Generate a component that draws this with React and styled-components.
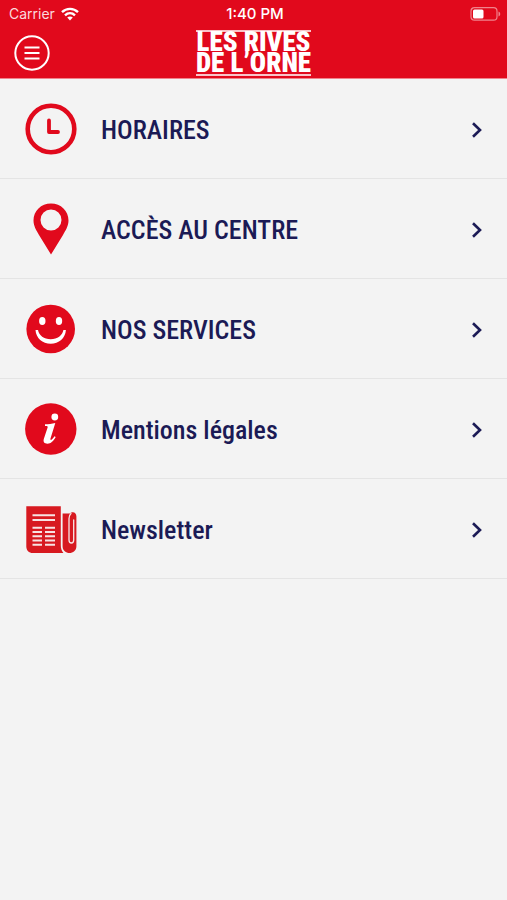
import React from "react";
import styled, { createGlobalStyle } from "styled-components";

const RED = "#e1091c";
const NAVY = "#1b1a55";

const GlobalStyle = createGlobalStyle`
  * { box-sizing: border-box; }
  body {
    margin: 0;
    background: #f3f3f3;
    font-family: "Roboto Condensed", "Liberation Sans", sans-serif;
  }
`;

const Header = styled.header`
  background: ${RED};
  color: #fff;
  border-bottom: 1px solid #f0838c;
`;

const StatusBar = styled.div`
  display: grid;
  grid-template-columns: 1fr auto 1fr;
  align-items: center;
  height: 28px;
  padding: 0 6px 0 9px;
  font: 14px/20px Inter, sans-serif;
`;

const Carrier = styled.div`
  display: flex;
  align-items: center;
  gap: 6px;
  color: #fbd9dc;
`;

const Time = styled.time`
  font-size: 15px;
  font-weight: 500;
`;

const Battery = styled.svg`
  justify-self: end;
`;

const NavBar = styled.div`
  display: grid;
  grid-template-columns: 1fr auto 1fr;
  align-items: center;
  height: 50px;
  padding: 0 14px;
`;

const MenuButton = styled.button`
  display: flex;
  width: 36px;
  height: 36px;
  padding: 0;
  border: 0;
  background: none;
  color: inherit;
  cursor: pointer;
`;

const Logo = styled.h1`
  margin: 0;
  border: solid #f9c4c9;
  border-width: 2px 0;
  font-size: 27px;
  line-height: 21px;
  font-weight: 900;
  text-align: center;
  white-space: nowrap;
`;

const List = styled.ul`
  margin: 0;
  padding: 0;
  list-style: none;
`;

const Item = styled.li`
  border-bottom: 1px solid #e4e4e4;
`;

const RowLink = styled.a`
  display: flex;
  align-items: center;
  gap: 23px;
  height: 99px;
  padding: 0 24px;
  color: ${NAVY};
  text-decoration: none;
`;

const Icon = styled.svg`
  flex: none;
  color: ${RED};
`;

const Label = styled.span`
  flex: 1;
  padding-top: 2px;
  font-size: 26px;
  line-height: 40px;
  font-weight: 500;
  white-space: nowrap;
`;

const Clock = () => (
  <Icon width="54" height="54" viewBox="0 0 54 54" fill="none" stroke="currentColor" aria-hidden="true">
    <circle cx="27" cy="27" r="23.3" strokeWidth="4.6" />
    <path d="M25 18.500V30h9" strokeWidth="3.8" strokeLinecap="round" strokeLinejoin="round" />
  </Icon>
);

const Pin = () => (
  <Icon width="54" height="54" viewBox="0 0 54 54" fill="currentColor" aria-hidden="true">
    <path fillRule="evenodd" d="M27 1.500C17 1.500 9.500 9 9.500 18.500c0 5.500 3 10 5.500 14.500L27 52.500 39 33c2.500-4.500 5.500-9 5.500-14.500C44.500 9 37 1.500 27 1.500zM27 7.500a10.500 10.500 0 1 1 0 21 10.500 10.500 0 0 1 0-21z" />
  </Icon>
);

const Smile = () => (
  <Icon width="54" height="54" viewBox="0 0 54 54" aria-hidden="true">
    <circle cx="26.700" cy="27" r="24.300" fill="currentColor" />
    <ellipse cx="18.300" cy="19" rx="3.200" ry="4" fill="#fff" />
    <ellipse cx="35" cy="19" rx="3.200" ry="4" fill="#fff" />
    <path d="M11.500 28c.5 8 7 13.800 15.200 13.800S41.400 36 41.900 28h-2.500c-1 5.500-6 9.300-12.700 9.300S15 33.500 14 28z" fill="#fff" />
  </Icon>
);

const Info = () => (
  <Icon width="54" height="54" viewBox="0 0 54 54" aria-hidden="true">
    <circle cx="26.800" cy="27" r="25.700" fill="currentColor" />
    <circle cx="30.800" cy="15" r="3.400" fill="#fff" />
    <path d="M21 22.300c3.600 0 6.800-.5 10.300-1.400l-4.800 15.600c-.4 1.500.4 1.700 1.300 1 1-.8 1.900-2 2.700-3.200l1.200.8c-2.200 4-4.900 6.700-8.200 6.700-3.200 0-4.500-1.800-3.700-4.700l3.800-11.600c.3-1.100-.2-1.600-1.200-1.600H21z" fill="#fff" />
  </Icon>
);

const News = () => (
  <Icon width="54" height="54" viewBox="0 0 54 54" fill="#d71920" aria-hidden="true">
    <path d="M2.300 4.300h34.500v39c0 3.500.8 5.500 2.600 7.700H9c-4.200 0-6.700-2.700-6.700-6.500z" />
    <path d="M38.600 11.500h7.200c1-.9 2-1.200 3-1.200 2.200 0 3.600 1.700 3.600 4.200v29.800c0 9-13.800 9-13.800 0z" />
    <path d="M47 11.500c-1.500 1.300-2 2.800-2 5V38c0 4 4.700 4 4.700 0V18" fill="none" stroke="#f7e6e6" strokeWidth="1.300" strokeLinecap="round" />
    <path d="M8.500 13.300h22.500M8.500 18h22.500M8.500 25.800h9.500M21 25.800h10M8.500 30h9.500M21 30h10M8.500 34.300h9.500M21 34.300h10M8.500 38.500h9.500M21 38.500h10M8.500 42.700h9.500M21 42.700h10" fill="none" stroke="#f7e3e3" strokeWidth="2" />
  </Icon>
);

const Chevron = () => (
  <svg width="14" height="20" viewBox="0 0 14 20" fill="none" stroke="currentColor" strokeWidth="2.600" aria-hidden="true">
    <path d="M4 4.300L11 11 4 17.700" />
  </svg>
);

const items = [
  { label: "HORAIRES", icon: Clock },
  { label: "ACCÈS AU CENTRE", icon: Pin },
  { label: "NOS SERVICES", icon: Smile },
  { label: "Mentions légales", icon: Info },
  { label: "Newsletter", icon: News },
];

export default function App() {
  return (
    <>
      <GlobalStyle />
      <Header>
        <StatusBar>
          <Carrier>
            Carrier
            <svg width="18" height="14" viewBox="0 0 18 14" fill="none" stroke="#fff" strokeWidth="2.400" aria-hidden="true">
              <path d="M1 5.200C5.500 .8 12.500 .8 17 5.200M4 8.300c2.900-2.700 7.100-2.700 10 0" />
              <path d="M6.200 10.500c1.600-1.500 4-1.500 5.600 0L9 13.500z" fill="#fff" stroke="none" />
            </svg>
          </Carrier>
          <Time>1:40 PM</Time>
          <Battery width="31" height="14" viewBox="0 0 31 14" aria-hidden="true">
            <rect x="1" y=".7" width="26" height="12.500" rx="3.500" fill="none" stroke="#f0838c" strokeWidth="1.200" />
            <rect x="3" y="2.500" width="10.500" height="9" rx="1.500" fill="#fff" />
            <path d="M28.500 4.500c2.300 1 2.300 4 0 5z" fill="#f0838c" />
          </Battery>
        </StatusBar>
        <NavBar>
          <MenuButton type="button" aria-label="Menu">
            <svg width="36" height="36" viewBox="0 0 36 36" fill="none" stroke="#fff" strokeWidth="2" aria-hidden="true">
              <circle cx="18" cy="18" r="16.700" />
              <path d="M10.500 12.500h15M10.500 18h15M10.500 23.500h15" />
            </svg>
          </MenuButton>
          <Logo>
            LES RIVES
            <br />
            DE L’ORNE
          </Logo>
        </NavBar>
      </Header>
      <main>
        <List>
          {items.map(({ label, icon: Glyph }) => (
            <Item key={label}>
              <RowLink href="#">
                <Glyph />
                <Label>{label}</Label>
                <Chevron />
              </RowLink>
            </Item>
          ))}
        </List>
      </main>
    </>
  );
}
